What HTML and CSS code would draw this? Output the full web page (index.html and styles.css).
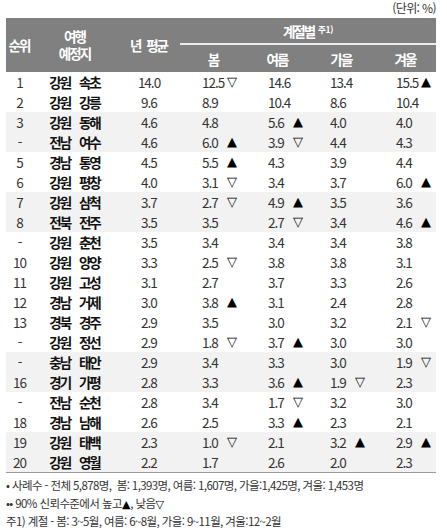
FILE: index.html
```html
<!DOCTYPE html>
<html lang="ko">
<head>
<meta charset="utf-8">
<link rel="stylesheet" href="styles.css">
</head>
<body>
<div class="page">
  <div class="unit">(단위: %)</div>
  <table class="tbl">
    <colgroup>
      <col class="c-rank"><col class="c-place"><col class="c-avg">
      <col class="c-s1"><col class="c-s2"><col class="c-s3"><col class="c-s4">
    </colgroup>
    <thead>
      <tr class="h1">
        <th rowspan="2">순위</th>
        <th rowspan="2"><span class="two">여행<br>예정지</span></th>
        <th rowspan="2">년 평균</th>
        <th colspan="4" class="season-group">계절별 <sup>주1)</sup></th>
      </tr>
      <tr class="h2">
        <th>봄</th><th>여름</th><th>가을</th><th>겨울</th>
      </tr>
    </thead>
    <tbody>
      <tr><td class="rk">1</td><td class="pl">강원 속초</td><td class="av">14.0</td><td class="s"><span class="n">12.5</span><span class="dn">▽</span></td><td class="s"><span class="n">14.6</span></td><td class="s"><span class="n">13.4</span></td><td class="s"><span class="n">15.5</span><span class="up">▲</span></td></tr>
      <tr><td class="rk">2</td><td class="pl">강원 강릉</td><td class="av">9.6</td><td class="s"><span class="n">8.9</span></td><td class="s"><span class="n">10.4</span></td><td class="s"><span class="n">8.6</span></td><td class="s"><span class="n">10.4</span></td></tr>
      <tr class="sh"><td class="rk">3</td><td class="pl">강원 동해</td><td class="av">4.6</td><td class="s"><span class="n">4.8</span></td><td class="s"><span class="n">5.6</span><span class="up">▲</span></td><td class="s"><span class="n">4.0</span></td><td class="s"><span class="n">4.0</span></td></tr>
      <tr class="sh"><td class="rk">-</td><td class="pl">전남 여수</td><td class="av">4.6</td><td class="s"><span class="n">6.0</span><span class="up">▲</span></td><td class="s"><span class="n">3.9</span><span class="dn">▽</span></td><td class="s"><span class="n">4.4</span></td><td class="s"><span class="n">4.3</span></td></tr>
      <tr><td class="rk">5</td><td class="pl">경남 통영</td><td class="av">4.5</td><td class="s"><span class="n">5.5</span><span class="up">▲</span></td><td class="s"><span class="n">4.3</span></td><td class="s"><span class="n">3.9</span></td><td class="s"><span class="n">4.4</span></td></tr>
      <tr><td class="rk">6</td><td class="pl">강원 평창</td><td class="av">4.0</td><td class="s"><span class="n">3.1</span><span class="dn">▽</span></td><td class="s"><span class="n">3.4</span></td><td class="s"><span class="n">3.7</span></td><td class="s"><span class="n">6.0</span><span class="up">▲</span></td></tr>
      <tr class="sh"><td class="rk">7</td><td class="pl">강원 삼척</td><td class="av">3.7</td><td class="s"><span class="n">2.7</span><span class="dn">▽</span></td><td class="s"><span class="n">4.9</span><span class="up">▲</span></td><td class="s"><span class="n">3.5</span></td><td class="s"><span class="n">3.6</span></td></tr>
      <tr class="sh"><td class="rk">8</td><td class="pl">전북 전주</td><td class="av">3.5</td><td class="s"><span class="n">3.5</span></td><td class="s"><span class="n">2.7</span><span class="dn">▽</span></td><td class="s"><span class="n">3.4</span></td><td class="s"><span class="n">4.6</span><span class="up">▲</span></td></tr>
      <tr><td class="rk">-</td><td class="pl">강원 춘천</td><td class="av">3.5</td><td class="s"><span class="n">3.4</span></td><td class="s"><span class="n">3.4</span></td><td class="s"><span class="n">3.4</span></td><td class="s"><span class="n">3.8</span></td></tr>
      <tr><td class="rk">10</td><td class="pl">강원 양양</td><td class="av">3.3</td><td class="s"><span class="n">2.5</span><span class="dn">▽</span></td><td class="s"><span class="n">3.8</span></td><td class="s"><span class="n">3.8</span></td><td class="s"><span class="n">3.1</span></td></tr>
      <tr><td class="rk">11</td><td class="pl">강원 고성</td><td class="av">3.1</td><td class="s"><span class="n">2.7</span></td><td class="s"><span class="n">3.7</span></td><td class="s"><span class="n">3.3</span></td><td class="s"><span class="n">2.6</span></td></tr>
      <tr><td class="rk">12</td><td class="pl">경남 거제</td><td class="av">3.0</td><td class="s"><span class="n">3.8</span><span class="up">▲</span></td><td class="s"><span class="n">3.1</span></td><td class="s"><span class="n">2.4</span></td><td class="s"><span class="n">2.8</span></td></tr>
      <tr><td class="rk">13</td><td class="pl">경북 경주</td><td class="av">2.9</td><td class="s"><span class="n">3.5</span></td><td class="s"><span class="n">3.0</span></td><td class="s"><span class="n">3.2</span></td><td class="s"><span class="n">2.1</span><span class="dn">▽</span></td></tr>
      <tr><td class="rk">-</td><td class="pl">강원 정선</td><td class="av">2.9</td><td class="s"><span class="n">1.8</span><span class="dn">▽</span></td><td class="s"><span class="n">3.7</span><span class="up">▲</span></td><td class="s"><span class="n">3.0</span></td><td class="s"><span class="n">3.0</span></td></tr>
      <tr class="sh"><td class="rk">-</td><td class="pl">충남 태안</td><td class="av">2.9</td><td class="s"><span class="n">3.4</span></td><td class="s"><span class="n">3.3</span></td><td class="s"><span class="n">3.0</span></td><td class="s"><span class="n">1.9</span><span class="dn">▽</span></td></tr>
      <tr class="sh"><td class="rk">16</td><td class="pl">경기 가평</td><td class="av">2.8</td><td class="s"><span class="n">3.3</span></td><td class="s"><span class="n">3.6</span><span class="up">▲</span></td><td class="s"><span class="n">1.9</span><span class="dn">▽</span></td><td class="s"><span class="n">2.3</span></td></tr>
      <tr><td class="rk">-</td><td class="pl">전남 순천</td><td class="av">2.8</td><td class="s"><span class="n">3.4</span></td><td class="s"><span class="n">1.7</span><span class="dn">▽</span></td><td class="s"><span class="n">3.2</span></td><td class="s"><span class="n">3.0</span></td></tr>
      <tr><td class="rk">18</td><td class="pl">경남 남해</td><td class="av">2.6</td><td class="s"><span class="n">2.5</span></td><td class="s"><span class="n">3.3</span><span class="up">▲</span></td><td class="s"><span class="n">2.3</span></td><td class="s"><span class="n">2.1</span></td></tr>
      <tr class="sh"><td class="rk">19</td><td class="pl">강원 태백</td><td class="av">2.3</td><td class="s"><span class="n">1.0</span><span class="dn">▽</span></td><td class="s"><span class="n">2.1</span></td><td class="s"><span class="n">3.2</span><span class="up">▲</span></td><td class="s"><span class="n">2.9</span><span class="up">▲</span></td></tr>
      <tr class="sh last"><td class="rk">20</td><td class="pl">강원 영월</td><td class="av">2.2</td><td class="s"><span class="n">1.7</span></td><td class="s"><span class="n">2.6</span></td><td class="s"><span class="n">2.0</span></td><td class="s"><span class="n">2.3</span></td></tr>
    </tbody>
  </table>
  <div class="notes">
    <p>• 사례수 - 전체 5,878명, &nbsp;봄: 1,393명, 여름: 1,607명, 가을:1,425명, 겨울: 1,453명</p>
    <p>•• 90% 신뢰수준에서 높고<span class="fu">▲</span>, 낮음<span class="fd">▽</span></p>
    <p>주1) 계절 - 봄: 3~5월, 여름: 6~8월, 가을: 9~11월, 겨울:12~2월</p>
  </div>
</div>
</body>
</html>
```
FILE: styles.css
```css
html, body {
  margin: 0;
  padding: 0;
  background: #ffffff;
}
body {
  font-family: "Noto Sans CJK KR", "Noto Sans", sans-serif;
  color: #333333;
}
.page {
  width: 430px;
  margin-left: 6px;
}
.unit {
  height: 18px;
  line-height: 15px;
  text-align: right;
  font-size: 12px;
  letter-spacing: -0.6px;
  color: #333;
}
.tbl {
  width: 430px;
  border-collapse: collapse;
  table-layout: fixed;
}
.c-rank { width: 26px; }
.c-place { width: 85px; }
.c-avg { width: 63px; }
.c-s1 { width: 66px; }
.c-s2 { width: 62px; }
.c-s3 { width: 66px; }
.c-s4 { width: 62px; }

.tbl th {
  background: #808080;
  color: #ffffff;
  font-weight: 700;
  font-size: 13.5px;
  letter-spacing: -2px;
  word-spacing: 4px;
  line-height: 16px;
  padding: 0;
  text-align: center;
  vertical-align: middle;
  overflow: hidden;
}
.tbl th .two {
  display: inline-block;
  line-height: 17px;
}
.tbl .h1 th { height: 24px; }
.tbl .h2 th { height: 26px; padding-top: 1px; }
.tbl th.season-group {
  border-bottom: 2px solid #ececec;
  padding-top: 1px;
  word-spacing: 2px;
}
.tbl th sup {
  font-size: 8.5px;
  letter-spacing: -0.3px;
  word-spacing: 0;
  vertical-align: 4px;
  line-height: 0;
}
.tbl td {
  height: 20px;
  padding: 0;
  font-size: 13.5px;
  line-height: 20px;
  letter-spacing: -1px;
  color: #333333;
  white-space: nowrap;
  overflow: hidden;
}
.tbl tr.sh td { background: #f2f2f2; }
.tbl tr.last td { border-bottom: 1px solid #9a9a9a; }
.tbl td.rk { text-align: center; padding-left: 1px; }
.tbl td.pl {
  text-align: center;
  font-weight: 700;
  color: #111111;
  letter-spacing: -2px;
  word-spacing: 7px;
}
.tbl td.av { text-align: center; padding-left: 1px; }
.tbl td.s { padding-left: 22px; }
.n {
  display: inline-block;
  width: 25px;
  height: 20px;
  vertical-align: top;
}
.up, .dn {
  display: inline-block;
  height: 20px;
  line-height: 20px;
  vertical-align: top;
  font-family: "DejaVu Sans", sans-serif;
  font-size: 13px;
  letter-spacing: 0;
  color: #000;
}
.notes {
  padding-top: 3px;
  font-size: 11.5px;
  letter-spacing: -0.6px;
  color: #333;
}
.notes p {
  margin: 0;
  height: 18px;
  line-height: 18px;
}
.fu, .fd {
  font-family: "DejaVu Sans", sans-serif;
  font-size: 11px;
  letter-spacing: 0;
  color: #000;
}
```
